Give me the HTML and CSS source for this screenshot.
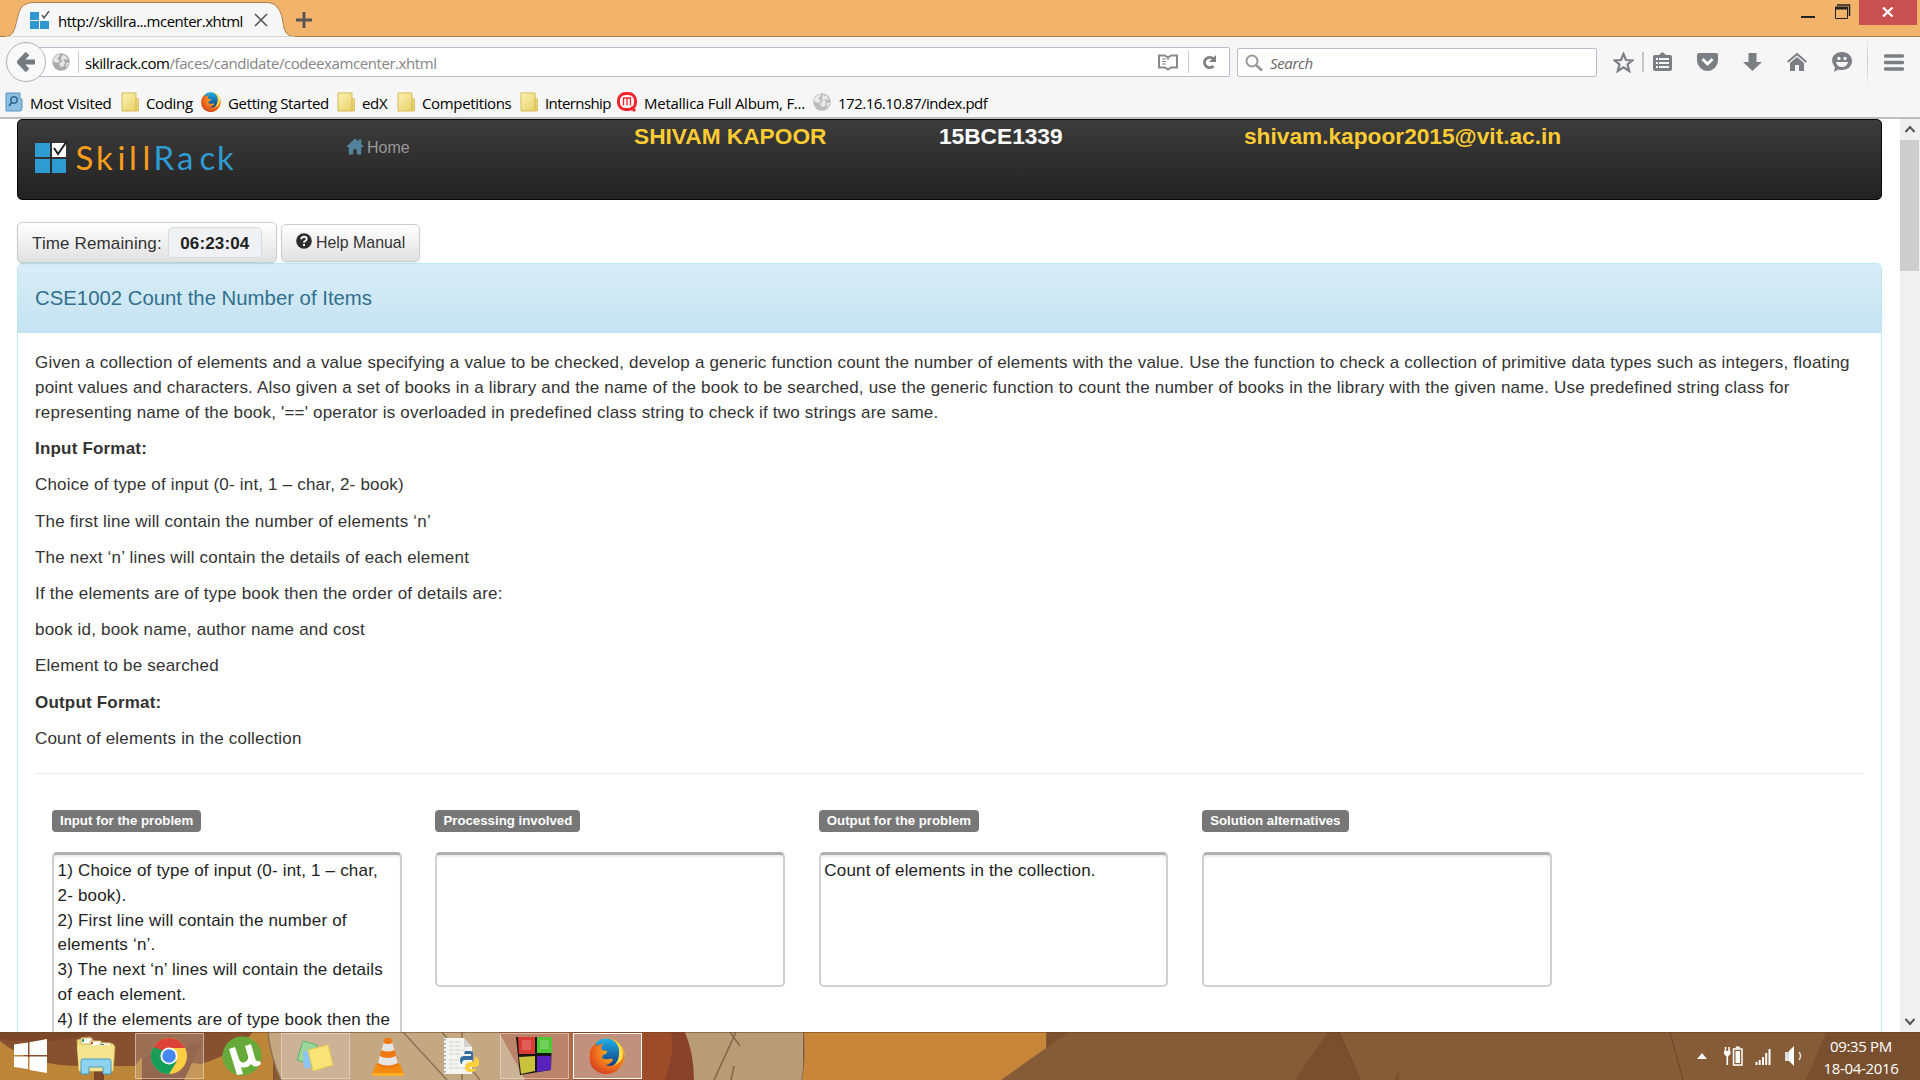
FILE: index.html
```html
<!DOCTYPE html>
<html lang="en">
<head>
<meta charset="utf-8">
<title>SkillRack</title>
<link rel="stylesheet" href="styles.css">
</head>
<body>
<svg class="defs" width="0" height="0">
  <defs>
    <linearGradient id="folderFill" x2="1" y2="1"><stop offset="0" stop-color="#fbf3b4"/><stop offset="1" stop-color="#e6cc60"/></linearGradient>
    <radialGradient id="foxFill" cx=".65" cy=".3" r=".8"><stop offset="0" stop-color="#ffca1f"/><stop offset=".5" stop-color="#f47b20"/><stop offset="1" stop-color="#d0381c"/></radialGradient>
    <linearGradient id="seaFill" x2="0" y2="1"><stop offset="0" stop-color="#1fb0e8"/><stop offset="1" stop-color="#12357c"/></linearGradient>
    <symbol id="folder" viewBox="0 0 18 20"><path d="M1 1h14v6h2q1 0 1 1v9q0 2-2 2H1z" fill="url(#folderFill)" stroke="#d6bb55"/><path d="M15 7v11" stroke="#d1b64e"/></symbol>
    <symbol id="firefox" viewBox="0 0 36 36">
      <circle cx="18" cy="18" r="17.5" fill="#fdc716"/>
      <circle cx="17" cy="15" r="14.5" fill="url(#seaFill)"/>
      <path d="M1 13Q3 8 7 5l1 3q4-2 7-3-4 4-2 7l5 1q1 2-4 4l-1 3q3 2 7 1 4-1 4 1-3 5-8 5 9 3 15-4 3-5 2-13 4 8 1 15-6 12-19 11Q1 33 .5 20z" fill="url(#foxFill)"/>
      <path d="M26 4q5 4 4 12 0 7-5 11 9-3 9-11Q34 8 26 4z" fill="#ffe04a"/>
    </symbol>
    <symbol id="globe" viewBox="0 0 18 18"><circle cx="9" cy="9" r="8.7" fill="#a9a9a9"/><path d="M1 7Q3 2 8 1L7 4 5 6l3 1-2 3-4-1zM10 2l4 1 2 4-3-1-2 1 2 2-1 4-3 1-2-3 3-3-1-3zM14 10l3 0-3 5z" fill="#e6e6e6"/></symbol>
    <symbol id="house" viewBox="0 0 20 18"><path d="M10 0 0 9.500h3V18h5v-6h4v6h5V9.500h3L17 6V1h-3v2.500z"/></symbol>
  </defs>
</svg>

<header class="browser">
  <div class="titlebar">
    <div class="tab">
      <svg class="tab-shape" width="310" height="38"><path d="M0 36.500H6C15 36 15 26 18 16 20 6 25 2.500 35 2.500H266C275 2.500 279 7 282 17 284 28 284 36 294 36.500H310" fill="#f6f6f6" stroke="#a6804e"/><path d="M6 37.200h289" stroke="#f6f6f6" stroke-width="1.600"/></svg>
      <svg class="tab-icon" width="20" height="19"><path d="M0 1h9v8H0zM0 10h9v8H0zM10 10h9v8h-9z" fill="#2f96cf"/><path d="M10 1h9v8h-9z" fill="#fff"/><path d="m12 4 2 3 5-7" fill="none" stroke="#555" stroke-width="1.500"/></svg>
      <span class="ui tab-title">http://skillra...mcenter.xhtml</span>
      <svg class="tab-close" width="14" height="14"><path d="m1 1 12 12M13 1 1 13" stroke="#555" stroke-width="1.600"/></svg>
    </div>
    <svg class="new-tab" width="16" height="16"><path d="M8 0v16M0 8h16" stroke="#555" stroke-width="2.800"/></svg>
    <div class="window-buttons">
      <svg width="14" height="16"><path d="M0 15h14" stroke="#222" stroke-width="2"/></svg>
      <svg width="16" height="16"><path d="M2 1h12.500v11" fill="none" stroke="#222" stroke-width="1.500"/><path d="M.5 3.500h12V14.500H.5z" fill="none" stroke="#222"/><path d="M0 4h13" stroke="#222" stroke-width="3"/></svg>
      <div class="close"><svg width="12" height="10"><path d="m1 .5 9.500 9M10.500.5 1 9.500" stroke="#fff" stroke-width="2.200"/></svg></div>
    </div>
  </div>
  <div class="navbar">
    <div class="back"><svg width="18" height="20"><path d="M10.500 1.500 2.500 10l8 8.500M3 10h15" fill="none" stroke="#737a80" stroke-width="5"/></svg></div>
    <div class="urlbar">
      <svg class="site-icon" width="18" height="18"><use href="#globe"/></svg>
      <i class="rule"></i>
      <span class="ui url"><b>skillrack.com</b>/faces/candidate/codeexamcenter.xhtml</span>
      <svg class="reader" width="20" height="17"><path d="M1 1.500h6l3 2 3-2h6v12h-6l-3 2-3-2H1z" fill="none" stroke="#8a8a8a" stroke-width="2"/><path d="M10 3v3M4 5h4M4 7.500h4M4 10h4" stroke="#8a8a8a" stroke-width="1.200"/></svg>
      <i class="rule"></i>
      <svg class="reload" width="15" height="15"><path d="M11.500 4A5.200 5.200 0 1 0 11.500 11" fill="none" stroke="#808080" stroke-width="2.800"/><path d="M14 0v7H7z" fill="#808080"/></svg>
    </div>
    <div class="search">
      <svg width="18" height="18"><circle cx="7" cy="7" r="5.500" fill="none" stroke="#999" stroke-width="2"/><path d="m11 11 6 5.500" stroke="#999" stroke-width="2.800"/></svg>
      <span class="ui">Search</span>
    </div>
    <div class="tools">
      <svg width="21" height="21"><path d="m10.500 2 2.500 6 6.500.4-5 4 1.700 6.600-5.700-3.600L4.800 19l1.700-6.600-5-4L8 8z" fill="none" stroke="#7b7f84" stroke-width="2.200"/></svg>
      <i class="bar"></i>
      <svg class="clip" width="19" height="20"><path d="M2 3h4l3.500-3L13 3h4q2 0 2 2v12q0 2-2 2H2q-2 0-2-2V5q0-2 2-2z" fill="#7b7f84"/><path d="M3 7h2m1 0h10M3 11h2m1 0h10M3 15h2m1 0h10" stroke="#f6f6f6" stroke-width="2.200"/></svg>
      <svg width="21" height="18"><path d="M2 0h17q2 0 2 2v5c0 6-5 11-10.500 11S0 13 0 7V2q0-2 2-2z" fill="#7b7f84"/><path d="m5.500 6 5 5 5-5" fill="none" stroke="#fff" stroke-width="2.800"/></svg>
      <svg width="19" height="18"><path d="M5.500 0h8v9H19l-9.500 9L0 9h5.500z" fill="#7b7f84"/></svg>
      <svg width="20" height="18"><path d="m.7 9 9.300-8 9.300 8" fill="none" stroke="#7b7f84" stroke-width="2"/><path d="m3 10 7-6 7 6v8h-5v-6H8v6H3z" fill="#7b7f84"/></svg>
      <svg width="20" height="20"><path d="M10 0C16 0 20 4 20 9s-4 9-10 9q-2 0-4-.5L2 20l1-5C-3 8 1 0 10 0z" fill="#7b7f84"/><circle cx="7" cy="6.500" r="1.700" fill="#f6f6f6"/><circle cx="13" cy="6.500" r="1.700" fill="#f6f6f6"/><path d="M4 10h12q-1 5-6 5t-6-5z" fill="#f6f6f6"/></svg>
      <i class="fade"></i>
      <svg class="menu" width="20" height="17"><path d="M1.500 2h17M1.500 8.500h17M1.500 15h17" stroke="#7b7f84" stroke-width="3.400" stroke-linecap="round"/></svg>
    </div>
  </div>
  <nav class="bookmarks ui">
    <span class="bm b1"><svg width="18" height="20"><path d="M1 1h14v6h2v9q0 3-2 3H1z" fill="#8cbfe2" stroke="#5a93bd"/><circle cx="9" cy="8" r="3.200" fill="none" stroke="#356c99" stroke-width="1.600"/><path d="m7 10-3 4" stroke="#356c99" stroke-width="2"/></svg><span>Most Visited</span></span>
    <span class="bm b2"><svg width="18" height="20"><use href="#folder"/></svg><span>Coding</span></span>
    <span class="bm b3"><svg width="20" height="20"><use href="#firefox"/></svg><span>Getting Started</span></span>
    <span class="bm b4"><svg width="18" height="20"><use href="#folder"/></svg><span>edX</span></span>
    <span class="bm b5"><svg width="18" height="20"><use href="#folder"/></svg><span>Competitions</span></span>
    <span class="bm b6"><svg width="18" height="20"><use href="#folder"/></svg><span>Internship</span></span>
    <span class="bm b7"><svg width="20" height="20"><rect x="1.500" y="1.500" width="17" height="16" rx="7" fill="#fff" stroke="#f3242b" stroke-width="3"/><path d="m14 15 4 4" stroke="#f3242b" stroke-width="3"/><path d="M6 6h8M6.500 5.500v8M10 5.500v8M13.500 5.500v8" fill="none" stroke="#f3242b" stroke-width="1.300"/></svg><span>Metallica Full Album, F...</span></span>
    <span class="bm b8"><svg width="18" height="18" opacity=".75"><use href="#globe"/></svg><span>172.16.10.87/index.pdf</span></span>
  </nav>
</header>

<div class="viewport">
  <main class="page">
    <div class="topbar">
      <svg class="logo" width="215" height="50">
        <path d="M0 4h15v14H0zM0 20h15v14H0zM17 20h14v14H17z" fill="#2f9bd3"/><path d="M17 4h14v14H17z" fill="#fff"/><path d="m19 9 4 6 9-13" fill="none" stroke="#222" stroke-width="2"/>
        <text class="logo-text" y="30.500" fill="#fb9d1c" x="40.500 61 82.500 94 107.500">Skill</text>
        <text class="logo-text" y="30.500" fill="#2f9bd3" x="118.500 142 164.500 182">Rack</text>
      </svg>
      <a class="home"><svg width="18" height="17" fill="#52839a"><use href="#house"/></svg>Home</a>
      <strong class="name">SHIVAM KAPOOR</strong>
      <strong class="regno">15BCE1339</strong>
      <strong class="mail">shivam.kapoor2015@vit.ac.in</strong>
    </div>
    <div class="controls">
      <div class="btn timer">Time Remaining: <b>06:23:04</b></div>
      <div class="btn help"><svg width="16" height="16"><circle cx="8" cy="8" r="7.800" fill="#2d2d2d"/><path d="M5.300 6.200Q5.300 3.700 8 3.700T10.700 6Q10.700 7.200 9.300 8 8 8.600 8 9.700" fill="none" stroke="#f2f2f2" stroke-width="2"/><path d="M7 11h2v2H7z" fill="#f2f2f2"/></svg>Help Manual</div>
    </div>
    <section class="panel">
      <h1>CSE1002 Count the Number of Items</h1>
      <div class="content">
        <p>Given a collection of elements and a value specifying a value to be checked, develop a generic function count the number of elements with the value. Use the function to check a collection of primitive data types such as integers, floating<br>point values and characters. Also given a set of books in a library and the name of the book to be searched, use the generic function to count the number of books in the library with the given name. Use predefined string class for<br>representing name of the book, '==' operator is overloaded in predefined class string to check if two strings are same.</p>
        <p><b>Input Format:</b></p>
        <p>Choice of type of input (0- int, 1 – char, 2- book)</p>
        <p>The first line will contain the number of elements ‘n’</p>
        <p>The next ‘n’ lines will contain the details of each element</p>
        <p>If the elements are of type book then the order of details are:</p>
        <p>book id, book name, author name and cost</p>
        <p>Element to be searched</p>
        <p><b>Output Format:</b></p>
        <p>Count of elements in the collection</p>
        <hr>
        <div class="grid">
          <div class="field"><span class="label">Input for the problem</span><div class="area tall">1) Choice of type of input (0- int, 1 – char,<br>2- book).<br>2) First line will contain the number of<br>elements ‘n’.<br>3) The next ‘n’ lines will contain the details<br>of each element.<br>4) If the elements are of type book then the</div></div>
          <div class="field"><span class="label">Processing involved</span><div class="area"></div></div>
          <div class="field"><span class="label">Output for the problem</span><div class="area">Count of elements in the collection.</div></div>
          <div class="field"><span class="label">Solution alternatives</span><div class="area"></div></div>
        </div>
      </div>
    </section>
  </main>
  <div class="scrollbar">
    <svg width="20" height="21"><path d="m5.500 13 4.500-5 4.500 5" fill="none" stroke="#555" stroke-width="2"/></svg>
    <div class="thumb"></div>
    <svg class="down" width="20" height="21"><path d="m5.500 8 4.500 5 4.500-5" fill="none" stroke="#555" stroke-width="2"/></svg>
  </div>
</div>

<footer class="taskbar">
  <svg class="wallpaper" width="1920" height="48">
    <rect width="1920" height="48" fill="#865b37"/>
    <path d="M0 0h275v48H0z" fill="#87502f"/>
    <path d="M0 9Q30 34 80 34l55 0 6-8 60 6Q235 22 253 0h20v48H0z" fill="#bd8538"/>
    <path d="M0 0h95Q60 14 0 7zM94 33h10v15H94zM142 48l0-22 60-16-18 38z" fill="#7c4729"/>
    <path d="M268 0h260v48H281Q270 22 268 0z" fill="#c4a783"/>
    <path d="M268 0q2 24 13 48M403 0l44 48M442 0l38 48M462 0v48" fill="none" stroke="#8f7355" stroke-width="1.500"/>
    <path d="M499 0h110v48h-84z" fill="#af6c4b"/>
    <path d="M573 0h112q9 22 9 48H573z" fill="#9d4c29"/>
    <path d="M671 0h14q9 22 9 48h-29q10-25 6-48z" fill="#88412b"/>
    <path d="M685 0h118v48H694Q694 22 685 0z" fill="#b99b76"/>
    <path d="M736 0 714 48M730 0l10 14M734 34l-3 14M804 0q2 28-2 48" fill="none" stroke="#83664a" stroke-width="1.500"/>
    <path d="M804 0h242v16l-45 32H802q4-20 2-48z" fill="#c7863a"/>
    <path d="M1047 0h22l-22 16z" fill="#79512f"/>
    <path d="m1328 0-33 48h64l-20-48zM1399 40v8h-5zM1826 0h94v48H1806z" fill="#79502f"/>
    <path d="m1339 0 21 48M1670 0l13 48" stroke="#6c4527" fill="none"/>
    <path d="M0 .5h1920" stroke="#6a4023" opacity=".5"/>
  </svg>
  <div class="start"><svg width="33" height="34"><path d="M0 5.500 14 3.500V16H0zM15.500 3.200 33 0v16H15.500zM0 17.500h14V30L0 28zM15.500 17.500H33V34l-17.500-3z" fill="#fff"/></svg></div>
  <div class="apps">
    <div class="app"><svg width="40" height="40"><path d="M1 4 14 1l3 4 20 3 2 3-2 24H3z" fill="#f3df83" stroke="#c9ad51"/><path d="M5 2h11v6H5zM14 5h11v5H14zM24 7h11v5H24z" fill="#fff" stroke="#cfb763"/><path d="M6 3h2v3H6z" fill="#3c9a4a"/><path d="M15 6h2v2h-2z" fill="#d8432f"/><path d="M25 8h3v2h-3z" fill="#2b92c8"/><path d="M1 9h37l-1 26H3z" fill="#f5e48f"/><path d="M5 25q0-2 2-2h26q2 0 2 2v13h-8v-7H13v7H5z" fill="#8dd2ee" stroke="#4a9abb"/></svg></div>
    <div class="app open"><svg width="36" height="36"><circle cx="18" cy="18" r="18" fill="#ffce43"/><path d="M2.400 9A18 18 0 0 1 33.600 9L34 10H18L10 22z" fill="#dd4238"/><path d="M2.400 9A18 18 0 0 0 18 36l8-13-8 3-8-4z" fill="#159e5a"/><path d="M2.400 9 10 22l3-9z" fill="#159e5a"/><circle cx="18" cy="18" r="8.500" fill="#fff"/><circle cx="18" cy="18" r="6.800" fill="#4787ef"/></svg></div>
    <div class="app"><svg width="40" height="40"><circle cx="20" cy="20" r="19.500" fill="#67aa39"/><path d="m7 13 6-2 4 12q2 5 6 3 4-2 3-6l-3-10 6-2 4 14q1 4 5 3l1 3q-6 5-10 0-4 5-10 3l2 7-6 1z" fill="#fff"/></svg></div>
    <div class="app open"><svg width="38" height="34"><path d="m7 2 14 4-4 20-16-5z" fill="#9bd79c" stroke="#5bb56a"/><path d="m7 12 16 0 3 16-18 1z" fill="#8fc5f6"/><path d="m12 11 20-5 5 20-20 6z" fill="#f8e376" stroke="#e7cb50"/></svg></div>
    <div class="app"><svg width="34" height="39"><path d="m5 27-4 10h32l-4-10z" fill="#f58a12"/><path d="M14 1h6l8 27q-10 7-22 0z" fill="#ee7911"/><path d="m12.500 6-2 7q6 3 13 0l-2-7q-4 2-9 0zM8.500 19 7 26q9 5 20 0l-2-7q-9 4-16.500 0z" fill="#e5e5e5"/><path d="M1 36h32v3H1z" fill="#ffae25"/></svg></div>
    <div class="app"><svg width="38" height="39"><path d="M2 1h20l8 9v27H2z" fill="#f4f4f2"/><path d="M22 1v9h8z" fill="#d2d2d2"/><path d="M3 2v34" stroke="#aaa" stroke-width="2" stroke-dasharray="1.500 2.500"/><path d="M7 5h11M7 9h13M7 13h16M7 17h12M7 23h10M7 27h9M7 31h18" stroke="#cfcfcf" stroke-dasharray="5 1"/><path d="M23 14h5q3 0 3 3v6h-8q-3 0-3 4h-1q-3-8 3-8h7v-2h-7z" fill="#356f9f"/><path d="M33 20h2q5 8-1 10h-6v2h6q0 3-5 3-6 0-6-4 0-6 5-6h4z" fill="#ffd13f"/></svg></div>
    <div class="app open"><svg width="38" height="40"><path d="M1 1h36l-1 33L5 39z" fill="#161616"/><path d="M3 1h17v17H4z" fill="#da3b32"/><path d="M22 1h15v16H22z" fill="#4fc736"/><path d="m4 21 16-1v15L6 38z" fill="#c9c23a"/><path d="M22 20h14v14l-14 2z" fill="#5a22bd"/><path d="M7 4h9v10H7zM25 4h9v9h-9z" fill="#fff" opacity=".18"/></svg></div>
    <div class="app open active"><svg width="36" height="36"><use href="#firefox"/></svg></div>
  </div>
  <div class="tray">
    <svg width="10" height="6"><path d="m5 0 5 6H0z" fill="#f2f2f2"/></svg>
    <svg class="power" width="19" height="20"><path d="M9.500 3h8.500v16H9.500z" fill="none" stroke="#fff" stroke-width="1.500"/><path d="M11.800 1.500h4" stroke="#fff" stroke-width="2"/><path d="M11.500 5h4.500v12h-4.500z" fill="#fff"/><path d="M1.500 1v4M5 1v4M3.300 9v10" stroke="#fff" stroke-width="1.600"/><path d="M0 5h6.500v3L4 10.500H2.500L0 8z" fill="#fff"/></svg>
    <svg class="signal" width="16" height="17"><path d="M1.500 17v-3M4.700 17v-5M8 17V9M11.200 17V5M14.500 17V1" stroke="#fff" stroke-width="2"/></svg>
    <svg class="sound" width="17" height="20"><path d="M0 6h4v9H0z" fill="#ddd"/><path d="m4 5 5-5v20l-5-5z" fill="#fff"/><path d="M14 6q3 4 0 8" fill="none" stroke="#ddd" stroke-width="1.500"/></svg>
    <div class="clock ui"><span>09:35 PM</span><span>18-04-2016</span></div>
  </div>
</footer>
</body>
</html>
```
FILE: styles.css
```css
* { box-sizing: border-box; }
body { margin: 0; width: 1920px; height: 1080px; overflow: hidden; display: flex; flex-direction: column; background: #fff; font: 17px/25px "Liberation Sans", Arial, sans-serif; color: #333; }
svg { display: block; flex: none; }
.defs { position: absolute; }
.ui { font-family: "Open Sans", "Noto Sans", sans-serif; font-size: 15px; line-height: 20px; color: #000; white-space: nowrap; letter-spacing: -.35px; }

.browser { height: 119px; flex: none; background: #f6f6f6; border-bottom: 2px solid #bdbdbd; }
.titlebar { height: 37px; display: flex; background: #f2b36b; border-bottom: 1px solid #a6804e; }
.tab { position: relative; width: 296px; height: 37px; display: flex; align-items: center; padding-left: 30px; flex: none; }
.tab-shape { position: absolute; left: 0; top: 0; }
.tab-icon, .tab-title, .tab-close { position: relative; }
.tab-title { margin: 4px 0 0 8px; width: 184px; letter-spacing: -.48px; }
.tab-icon { margin-top: 3px; }
.tab-close { margin: 2px 0 0 12px; }
.new-tab { position: relative; margin-top: 12px; }
.window-buttons { display: flex; margin-left: auto; padding-right: 3px; }
.window-buttons > svg:first-child { margin: 2px 20px 0 0; }
.window-buttons > svg:nth-child(2) { margin: 4px 8px 0 0; }
.close { width: 58px; height: 25px; background: #c75050; display: flex; justify-content: center; padding-top: 7px; }

.navbar { height: 50px; display: flex; align-items: center; padding-left: 6px; }
.back { width: 40px; height: 40px; border: 1px solid #a9b3bf; border-radius: 50%; background: #f9f9f9; display: flex; align-items: center; justify-content: center; z-index: 1; }
.urlbar { width: 1192px; height: 30px; margin-left: -8px; padding: 0 12px 0 13px; display: flex; align-items: center; background: #fff; border: 1px solid #b5bfcb; border-radius: 2px; }
.rule { width: 1px; height: 22px; background: #ccc; margin: 0 6px 0 8px; }
.reader { margin-left: auto; }
.reader + .rule { margin: 0 13px 0 10px; }
.url { color: #858585; margin-top: 2px; letter-spacing: -.42px; }
.url b { color: #000; font-weight: 400; }
.search { width: 360px; height: 29px; margin: 1px 0 0 7px; padding-left: 7px; display: flex; align-items: center; gap: 7px; background: #fff; border: 1px solid #b5bfcb; border-radius: 2px; }
.search .ui { color: #666; font-style: italic; margin-top: 1px; }
.tools { display: flex; align-items: center; margin-left: 16px; gap: 25px; }
.tools .bar { width: 2px; height: 20px; background: #c4c4c4; margin: 0 -16px 0 -17px; }
.tools .fade { width: 1px; height: 48px; background: linear-gradient(#eee, #ccc, #eee); margin: 0 -9px 0 -10px; }

.bookmarks { height: 30px; display: flex; align-items: center; padding-left: 5px; }
.bm { display: flex; align-items: center; gap: 7px; }
.bm > span { margin-top: 2px; }
.b1 { width: 116px; } .b2 { width: 80px; } .b3 { width: 136px; } .b4 { width: 60px; }
.b5 { width: 123px; } .b6 { width: 97px; } .b7 { width: 196px; }
.b6 { letter-spacing: -.6px; } .b7 { letter-spacing: -.26px; } .b8 { letter-spacing: -.5px; }

.viewport { height: 913px; display: flex; flex: none; overflow: hidden; }
.page { flex: 1; padding: 0 18px 0 17px; min-width: 0; }
.topbar { height: 81px; display: grid; grid-template-columns: 311px 288px 305px 305px 1fr; align-items: start; padding-left: 17px; border: 1px solid #080808; border-radius: 5px; background: linear-gradient(#3c3c3c, #222); }
.logo { margin-top: 19px; overflow: visible; }
.logo-text { font: 33px Lato, sans-serif; }
.home { display: flex; align-items: center; gap: 3px; margin-top: 15px; font-size: 16px; color: #999; }
.home svg { margin-top: -2px; }
.topbar strong { font-size: 22.700px; line-height: 28px; margin-top: 2px; color: #fc3; white-space: nowrap; }
.topbar .regno { color: #fff; }
.controls { height: 63px; display: flex; align-items: flex-end; gap: 4px; }
.btn { display: flex; align-items: center; border: 1px solid #ccc; border-radius: 5px; background: linear-gradient(#fff, #e0e0e0); box-shadow: 0 1px 2px rgba(0,0,0,.08); white-space: nowrap; }
.timer { width: 260px; height: 41px; padding: 1px 0 0 14px; letter-spacing: .13px; }
.timer b { margin: -2px 0 0 6px; width: 94px; height: 31px; line-height: 31px; text-align: center; background: #f0f1f4; border: 1px solid #dcdcdc; border-radius: 5px; color: #222; }
.help { width: 139px; height: 38px; margin-bottom: 1px; padding: 0 0 1px 14px; gap: 4px; font-size: 15.900px; }
.help svg { margin-bottom: 3px; }

.panel { height: 900px; border: 1px solid #bce8f1; border-radius: 5px; }
h1 { margin: 0; height: 69px; padding: 0 17px; font-size: 20.350px; font-weight: 400; line-height: 69px; color: #31708f; background: linear-gradient(#d9edf7, #c4e3f0); border-radius: 4px 4px 0 0; }
.content { padding: 17px; white-space: nowrap; letter-spacing: .192px; }
p { margin: 0 0 11.200px; }
hr { margin: 22px 0 0; border: 0; border-top: 1px solid #eee; }
.grid { display: grid; grid-template-columns: repeat(4, 349.500px); gap: 33.900px; padding: 36px 17px 0; }
.label { display: block; width: max-content; height: 22px; padding: 0 8px; border-radius: 4px; background: #777; color: #fff; font-size: 13.250px; font-weight: 700; line-height: 21px; letter-spacing: 0; }
.area { margin-top: 20px; height: 135px; padding: 4px 3.500px; border: 2px solid #d0d0d0; border-top: 3px solid #b0b0b0; border-radius: 5px; box-shadow: inset 0 2px 2px #eee; color: #222; line-height: 24.900px; }
.area.tall { height: 300px; }

.scrollbar { width: 20px; background: #f0f0f0; display: flex; flex-direction: column; }
.thumb { width: 19px; height: 131px; background: #cdcdcd; }
.down { margin-top: auto; }

.taskbar { position: relative; height: 48px; flex: none; display: flex; align-items: center; }
.wallpaper { position: absolute; left: 0; top: 0; }
.start { position: relative; width: 62px; padding-left: 14px; }
.apps { position: relative; display: flex; gap: 4px; }
.app { width: 69px; height: 46px; display: flex; align-items: center; justify-content: center; border: 1px solid transparent; }
.app > svg { margin-right: 1px; }
.app.open { background: rgba(230,220,220,.22); border-color: rgba(235,225,215,.55); }
.app.active { background: rgba(240,230,230,.45); border-color: #fff; }
.tray { position: relative; margin-left: auto; display: flex; align-items: center; }
.power { margin-left: 17px; }
.signal { margin-left: 12px; }
.sound { margin-left: 14px; }
.clock { display: flex; flex-direction: column; width: 118px; align-items: center; color: #fff; line-height: 22px; padding-top: 2px; }
```
